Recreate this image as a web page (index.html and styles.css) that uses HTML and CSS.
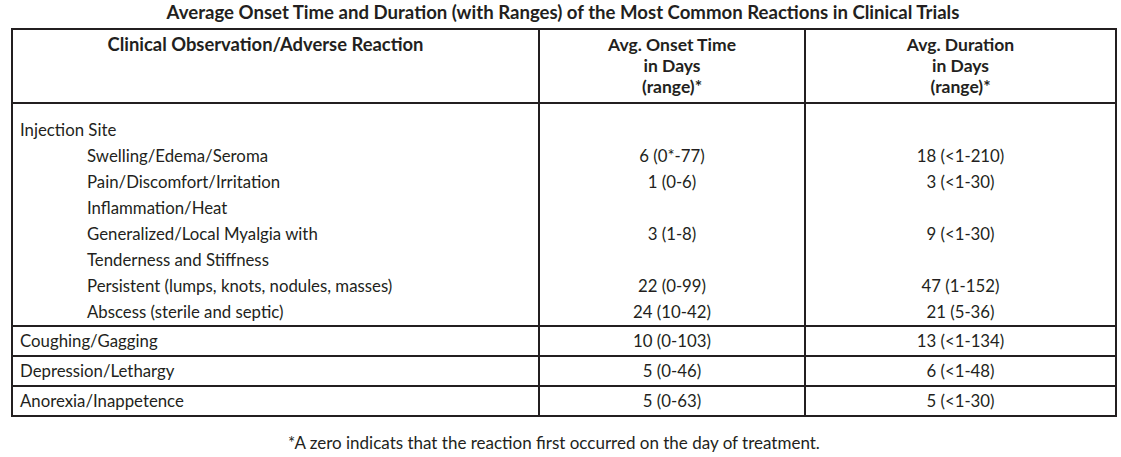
FILE: index.html
```html
<!DOCTYPE html>
<html lang="en">
<head>
<meta charset="utf-8">
<title>Average Onset Time and Duration</title>
<link rel="stylesheet" href="styles.css">
</head>
<body>
<div class="page">
  <h1 class="title">Average Onset Time and Duration (with Ranges) of the Most Common Reactions in Clinical Trials</h1>
  <table class="grid">
    <colgroup>
      <col class="c1">
      <col class="c2">
      <col class="c3">
    </colgroup>
    <thead>
      <tr>
        <th class="h-obs">Clinical Observation/Adverse Reaction</th>
        <th>Avg. Onset Time<br>in Days<br>(range)*</th>
        <th>Avg. Duration<br>in Days<br>(range)*</th>
      </tr>
    </thead>
    <tbody class="group">
      <tr class="first"><td>Injection Site</td><td></td><td></td></tr>
      <tr><td class="sub">Swelling/Edema/Seroma</td><td>6 (0*-77)</td><td>18 (&lt;1-210)</td></tr>
      <tr><td class="sub">Pain/Discomfort/Irritation</td><td>1 (0-6)</td><td>3 (&lt;1-30)</td></tr>
      <tr><td class="sub">Inflammation/Heat</td><td></td><td></td></tr>
      <tr><td class="sub">Generalized/Local Myalgia with</td><td>3 (1-8)</td><td>9 (&lt;1-30)</td></tr>
      <tr><td class="sub">Tenderness and Stiffness</td><td></td><td></td></tr>
      <tr><td class="sub">Persistent (lumps, knots, nodules, masses)</td><td>22 (0-99)</td><td>47 (1-152)</td></tr>
      <tr class="last"><td class="sub">Abscess (sterile and septic)</td><td>24 (10-42)</td><td>21 (5-36)</td></tr>
    </tbody>
    <tbody class="single">
      <tr><td>Coughing/Gagging</td><td>10 (0-103)</td><td>13 (&lt;1-134)</td></tr>
      <tr><td>Depression/Lethargy</td><td>5 (0-46)</td><td>6 (&lt;1-48)</td></tr>
      <tr><td>Anorexia/Inappetence</td><td>5 (0-63)</td><td>5 (&lt;1-30)</td></tr>
    </tbody>
  </table>
  <p class="note">*A zero indicats that the reaction first occurred on the day of treatment.</p>
</div>
</body>
</html>
```

FILE: styles.css
```css
html, body {
  margin: 0;
  padding: 0;
  background: #ffffff;
}

.page {
  padding: 0 0 0 11px;
  width: 1104px;
  font-family: Lato, "Open Sans", sans-serif;
  color: #231f20;
}

.title {
  margin: 2px 0 6px 0;
  font-size: 18.6px;
  line-height: 20px;
  font-weight: 700;
  text-align: center;
}

.grid {
  width: 1104px;
  table-layout: fixed;
  border-collapse: collapse;
  border: 2px solid #231f20;
  font-size: 16.8px;
}

.c1 { width: 527px; }
.c2 { width: 266px; }
.c3 { width: 311px; }

.grid th {
  border: 2px solid #231f20;
  height: 74px;
  padding: 4px 0 0 0;
  vertical-align: top;
  font-size: 17.5px;
  line-height: 21px;
  font-weight: 700;
  text-align: center;
  box-sizing: border-box;
}

.grid th.h-obs {
  padding-right: 20px;
  font-size: 18.4px;
}

.grid td {
  border-left: 2px solid #231f20;
  border-right: 2px solid #231f20;
  padding: 0;
  text-align: center;
  line-height: 26px;
  height: 26px;
}

.grid td:first-child {
  text-align: left;
  padding-left: 7px;
}

.grid td.sub {
  padding-left: 74px;
}

.group tr.first td {
  padding-top: 13px;
}

.group tr.first td:first-child {
  padding-left: 7px;
}

.single td {
  border-top: 2px solid #231f20;
  height: 28px;
  line-height: 28px;
}

.note {
  margin: 16px 0 0 0;
  padding-right: 18px;
  font-size: 17px;
  line-height: 20px;
  text-align: center;
}
```
